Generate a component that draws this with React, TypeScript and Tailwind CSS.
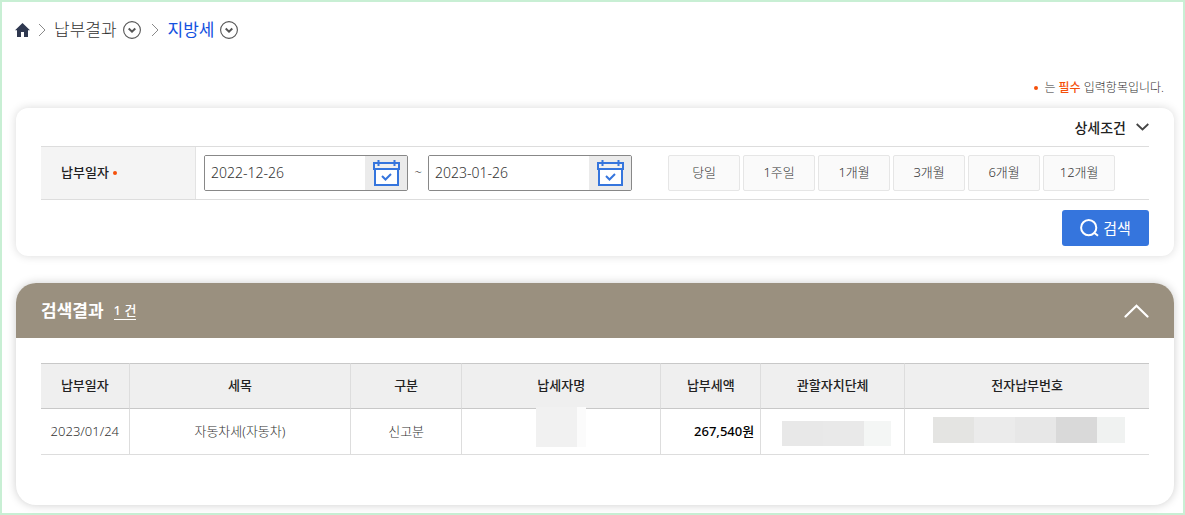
import React, { useState } from "react";

const PERIODS = ["당일", "1주일", "1개월", "3개월", "6개월", "12개월"];

function HomeIcon() {
  return (
    <svg width="15" height="14" viewBox="0 0 15 14" fill="#2f3850" aria-hidden="true">
      <path d="M7.5 0 L15 7.2 H13 V14 H9 V9 H6 V14 H2 V7.2 H0 Z" />
    </svg>
  );
}

function Separator() {
  return (
    <svg width="8" height="14" viewBox="0 0 8 14" fill="none" stroke="#8a8a8a" aria-hidden="true">
      <path d="M1 1 L7 7 L1 13" />
    </svg>
  );
}

function CircleChevron() {
  return (
    <svg width="18" height="18" viewBox="0 0 18 18" fill="none" stroke="#555" aria-hidden="true">
      <circle cx="9" cy="9" r="8.4" strokeWidth="1.1" />
      <path d="M5.7 7.6 L9 10.7 L12.3 7.6" strokeWidth="2" />
    </svg>
  );
}

function CalendarIcon() {
  return (
    <svg width="27" height="27" viewBox="0 0 27 27" fill="none" stroke="#3575dd" strokeWidth="2" aria-hidden="true">
      <path d="M2 9 V25 H25 V9" fill="#fff" />
      <rect x="1" y="3" width="25" height="6" fill="#f0f0f0" />
      <path d="M5.5 0 V6 M21.5 0 V6" />
      <path d="M9 16 L12.5 19.5 L18 14" />
    </svg>
  );
}

function Dot() {
  return <span className="inline-block size-1 rounded-full bg-[#f5500a]" aria-hidden="true" />;
}

function DateField({ id, label, initial }: { id: string; label: string; initial: string }) {
  const [value, setValue] = useState(initial);
  return (
    <div className="flex h-9 w-[204px] overflow-hidden rounded-xs border border-[#888]">
      <input
        id={id}
        type="text"
        aria-label={label}
        value={value}
        onChange={(e) => setValue(e.target.value)}
        className="min-w-0 flex-1 bg-white px-1.5 text-sm font-light text-[#333] outline-none"
      />
      <button type="button" aria-label={`${label} 달력`} className="flex w-[42px] items-center justify-center bg-[#ebebeb]">
        <CalendarIcon />
      </button>
    </div>
  );
}

function Redacted({ className, colors }: { className: string; colors: string[] }) {
  return (
    <div className={className} aria-hidden="true">
      {colors.map((c, i) => (
        <span key={i} className={`${c} ${i < colors.length - 1 ? "w-[41px]" : "flex-1"}`} />
      ))}
    </div>
  );
}

const TH = "border-r border-[#ddd] p-0 text-center font-medium last:border-r-0";
const TD = "relative border-r border-[#ddd] p-0 text-center last:border-r-0";

export default function App() {
  const [open, setOpen] = useState(true);
  return (
    <main className="min-h-screen border-2 border-[#c8efd4] bg-white pr-[9px] pb-2 pl-[13px] font-['Noto_Sans','Noto_Sans_CJK_KR',sans-serif] text-[13px] text-[#333]">
      <nav aria-label="위치" className="flex h-14 items-center text-[17px] leading-6">
        <a href="#home" aria-label="홈" className="mr-2">
          <HomeIcon />
        </a>
        <Separator />
        <a href="#result" className="mr-1.5 ml-2 font-light">
          납부결과
        </a>
        <button type="button" aria-label="납부결과 메뉴">
          <CircleChevron />
        </button>
        <span className="mx-2.5">
          <Separator />
        </span>
        <a href="#local" className="mr-1.5 -ml-px text-[#1452e0]">
          지방세
        </a>
        <button type="button" aria-label="지방세 메뉴">
          <CircleChevron />
        </button>
      </nav>

      <p className="mt-5 mr-2.5 flex h-5 items-center justify-end text-[12px] font-light">
        <span className="mr-1.5 flex">
          <Dot />
        </span>
        <span>
          는 <strong className="font-medium text-[#f5500a]">필수</strong> 입력항목입니다.
        </span>
      </p>

      <section className="mt-2.5 ml-px rounded-xl bg-white px-[25px] pb-2.5 shadow-[0_0_10px_rgba(0,0,0,0.15)]">
        <div className="flex h-[38px] items-center justify-end">
          <button type="button" className="flex items-center gap-2.5 text-[14px] font-medium text-[#222]">
            상세조건
            <svg width="13" height="8" viewBox="0 0 13 8" fill="none" stroke="#444" strokeWidth="1.8" aria-hidden="true">
              <path d="M0.7 1 L6.5 6.5 L12.3 1" />
            </svg>
          </button>
        </div>
        <div className="flex border-y border-[#ddd]">
          <div className="flex w-[14%] items-center gap-1 border-r border-[#e3e3e3] bg-[#f4f4f4] pl-5 font-medium text-[#222]">
            <label htmlFor="from">납부일자</label> <Dot />
          </div>
          <div className="flex flex-1 items-center py-2 pl-2">
            <DateField id="from" label="납부일자 시작일" initial="2022-12-26" />
            <span className="w-5 text-center font-light">~</span>
            <DateField id="to" label="납부일자 종료일" initial="2023-01-26" />
            <div className="ml-9 flex gap-[3px]">
              {PERIODS.map((p) => (
                <button key={p} type="button" className="h-9 w-[72px] rounded-xs border border-[#e6e6e6] bg-[#fafafa] font-light">
                  {p}
                </button>
              ))}
            </div>
          </div>
        </div>
        <div className="mt-2.5 flex justify-end">
          <button type="button" className="flex h-9 w-[87px] items-center justify-center gap-1 rounded-[3px] bg-[#3575dd] text-[15px] text-white">
            <svg width="19" height="18" viewBox="0 0 19 18" fill="none" stroke="#fff" strokeWidth="2" aria-hidden="true">
              <circle cx="8.7" cy="8.7" r="7.6" />
              <path d="M13.8 13.5 L18 16.800" />
            </svg>
            검색
          </button>
        </div>
      </section>

      <section className="mt-[27px] ml-px overflow-hidden rounded-[20px] bg-white pb-[50px] shadow-[0_0_10px_rgba(0,0,0,0.2)]">
        <header className="flex h-[55px] items-center justify-between bg-[#9a907f] px-[25px] text-white">
          <div className="flex items-center gap-2.5">
            <h2 className="text-[17px] font-bold">검색결과</h2>
            <span className="border-b border-white text-[13px] leading-[18px] font-medium">1 건</span>
          </div>
          <button type="button" aria-label="검색결과 접기" aria-expanded={open} onClick={() => setOpen(!open)}>
            <svg width="25" height="14" viewBox="0 0 25 14" fill="none" stroke="#fff" strokeWidth="2.2" strokeLinecap="round" aria-hidden="true">
              <path d="M1.5 12.5 L12.5 1.8 L23.5 12.5" />
            </svg>
          </button>
        </header>
        {open && (
          <div className="px-[25px] pt-[25px]">
            <table className="w-full table-fixed border-separate border-spacing-0">
              <colgroup>
                <col className="w-[8%]" />
                <col className="w-[20%]" />
                <col className="w-[10%]" />
                <col className="w-[18%]" />
                <col className="w-[9%]" />
                <col className="w-[13%]" />
                <col className="w-[22%]" />
              </colgroup>
              <thead>
                <tr className="h-[46px] bg-[#efefef] text-[#222] [&>th]:border-y [&>th]:border-y-[#c8c8c8]">
                  <th scope="col" className={TH}>납부일자</th>
                  <th scope="col" className={TH}>세목</th>
                  <th scope="col" className={TH}>구분</th>
                  <th scope="col" className={TH}>납세자명</th>
                  <th scope="col" className={TH}>납부세액</th>
                  <th scope="col" className={TH}>관할자치단체</th>
                  <th scope="col" className={TH}>전자납부번호</th>
                </tr>
              </thead>
              <tbody>
                <tr className="h-[46px] font-light [&>td]:border-b">
                  <td className={TD}>2023/01/24</td>
                  <td className={TD}>자동차세(자동차)</td>
                  <td className={TD}>신고분</td>
                  <td className={TD}>
                    <Redacted
                      className="absolute -top-0.5 left-1/2 flex h-10 w-[50px] -translate-x-1/2"
                      colors={["bg-[#f1f1f1]", "bg-[#fbfbfb]"]}
                    />
                  </td>
                  <td className={TD}>
                    <span className="block pr-1.5 text-right font-medium text-black">267,540원</span>
                  </td>
                  <td className={TD}>
                    <Redacted
                      className="mt-1 ml-[21px] flex h-[25px] w-[109px]"
                      colors={["bg-[#e8e8e8]", "bg-[#e9e9e9]", "bg-[#f4f6f5]"]}
                    />
                  </td>
                  <td className={TD}>
                    <Redacted
                      className="mb-1 ml-7 flex h-[26px] w-48"
                      colors={["bg-[#e4e4e2]", "bg-[#ebebeb]", "bg-[#e7e7e7]", "bg-[#d9d9d9]", "bg-[#f0f2f1]"]}
                    />
                  </td>
                </tr>
              </tbody>
            </table>
          </div>
        )}
      </section>
    </main>
  );
}
